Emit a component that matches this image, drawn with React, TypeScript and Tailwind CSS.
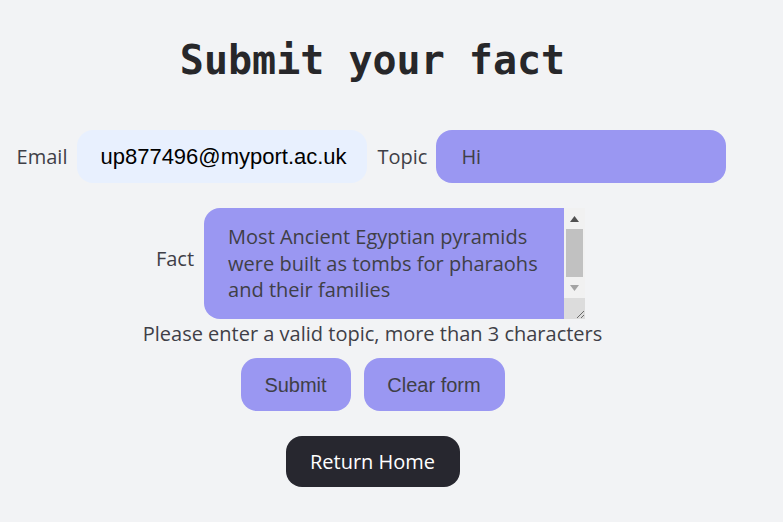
import React from 'react';

const sans = "font-['Open_Sans','Noto_Sans',sans-serif]";
const arial = "font-['Liberation_Sans',Arial,sans-serif]";

const FakeScrollbar = () => {
  return (
    <div className="flex flex-col w-[21px] bg-[#f1f1f1]">
      <div className="h-[21px] flex items-center justify-center">
        <svg width="9" height="6" viewBox="0 0 9 6">
          <path d="M0 6 L4.5 0 L9 6 Z" fill="#505050" />
        </svg>
      </div>
      <div className="mx-[2px] h-[48px] bg-[#c1c1c1]" />
      <div className="h-[21px] flex items-center justify-center">
        <svg width="9" height="6" viewBox="0 0 9 6">
          <path d="M0 0 L4.5 6 L9 0 Z" fill="#a3a3a3" />
        </svg>
      </div>
      <div className="flex-1" />
      <div className="h-[21px] bg-[#dcdcdc] flex items-end justify-end">
        <svg width="12" height="12" viewBox="0 0 12 12">
          <path d="M11 4 L4 11 M11 8 L8 11" stroke="#6b6b6b" strokeWidth="1" />
        </svg>
      </div>
    </div>
  );
};

const App = () => {
  return (
    <div className="min-h-screen bg-[#f2f3f5]">
      <div className="w-[745px] flex flex-col items-center pt-[33px]">
        <h1 className="text-[40px] leading-[54px] font-bold text-[#27272a] font-['DejaVu_Sans_Mono',monospace]">
          Submit your fact
        </h1>

        <div className={`mt-[43px] mr-[2px] flex items-center text-[20px] text-zinc-700 ${sans}`}>
          <label className="mr-[10px]">Email</label>
          <div className={`w-[290px] h-[53px] rounded-2xl bg-[#e8f0fe] flex items-center pl-[23px] text-black text-[22px] ${arial}`}>
            up877496@myport.ac.uk
          </div>
          <label className="ml-[10px] mr-[9px]">Topic</label>
          <div className="w-[290px] h-[53px] rounded-2xl bg-[#9a97f2] flex items-center pl-[25px]">Hi</div>
        </div>

        <div className={`mt-[25px] mr-[4px] flex items-center text-[20px] text-zinc-700 ${sans}`}>
          <label className="mr-[10px] pb-[10px]">Fact</label>
          <div className="flex h-[111px]">
            <div className="w-[360px] rounded-l-2xl bg-[#9a97f2] pl-[24px] pr-[8px] pt-[16px] leading-[26.5px]">
              Most Ancient Egyptian pyramids were built as tombs for pharaohs and their families
            </div>
            <FakeScrollbar />
          </div>
        </div>

        <p className={`mt-[1px] text-[20px] leading-[27px] text-zinc-700 ${sans}`}>
          Please enter a valid topic, more than 3 characters
        </p>

        <div className={`mt-[11px] flex gap-[13px] text-[20px] text-zinc-700 ${arial}`}>
          <button className="w-[110px] h-[53px] rounded-2xl bg-[#9a97f2]">Submit</button>
          <button className="w-[141px] h-[53px] rounded-2xl bg-[#9a97f2]">Clear form</button>
        </div>

        <button className={`mt-[25px] w-[174px] h-[51px] rounded-2xl bg-[#27272f] text-white text-[20px] ${sans}`}>
          Return Home
        </button>
      </div>
    </div>
  );
};

export default App;
